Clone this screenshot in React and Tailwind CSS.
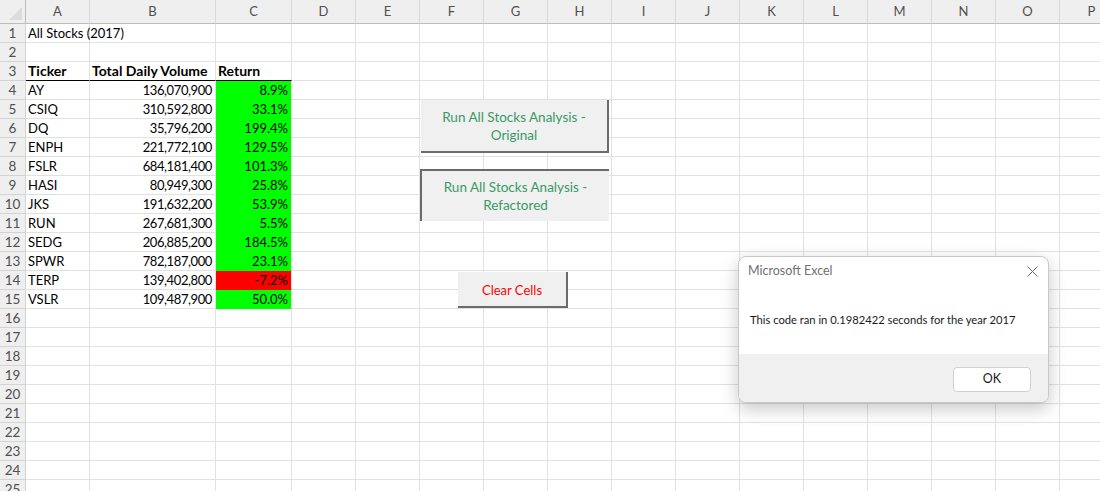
import React from "react";

const COLS = ["A","B","C","D","E","F","G","H","I","J","K","L","M","N","O","P","Q"];
const WIDTHS = [64,126,76,64,64,64,64,64,64,64,64,64,64,64,64,64,64];

const DATA = [
  ["AY","136,070,900","8.9%",true],
  ["CSIQ","310,592,800","33.1%",true],
  ["DQ","35,796,200","199.4%",true],
  ["ENPH","221,772,100","129.5%",true],
  ["FSLR","684,181,400","101.3%",true],
  ["HASI","80,949,300","25.8%",true],
  ["JKS","191,632,200","53.9%",true],
  ["RUN","267,681,300","5.5%",true],
  ["SEDG","206,885,200","184.5%",true],
  ["SPWR","782,187,000","23.1%",true],
  ["TERP","139,402,800","-7.2%",false],
  ["VSLR","109,487,900","50.0%",true],
];

function Cell({ children, className = "" }) {
  return (
    <div className={"h-[19px] border-r border-b border-[#e1e1e1] overflow-visible whitespace-nowrap leading-[18px] " + className}>
      {children}
    </div>
  );
}

function Row({ n }) {
  const cells = [];
  for (let c = 0; c < COLS.length; c++) {
    let content = null;
    let cls = "";
    if (n === 1 && c === 0) { content = "All Stocks (2017)"; cls = "pl-[2px] relative z-10"; }
    if (n === 3) {
      if (c === 0) { content = "Ticker"; cls = "pl-[2px] font-bold text-[14px]"; }
      if (c === 1) { content = "Total Daily Volume"; cls = "pl-[2px] font-bold text-[14px]"; }
      if (c === 2) { content = "Return"; cls = "pl-[2px] font-bold text-[14px]"; }
      if (c <= 2) cls += " border-b-black";
    }
    if (n >= 4 && n <= 15) {
      const d = DATA[n - 4];
      if (c === 0) { content = d[0]; cls = "pl-[2px]"; }
      if (c === 1) { content = d[1]; cls = "text-right pr-[3px] tracking-[-0.4px]"; }
      if (c === 2) {
        content = d[2];
        cls = "text-right pr-[3px] " + (d[3] ? "bg-[#00ff00] border-b-[#00ff00]" : "bg-[#ff0000] border-b-[#ff0000]");
      }
    }
    cells.push(<Cell key={c} className={cls}>{content}</Cell>);
  }
  return (
    <>
      <div className="h-[19px] border-r border-b border-[#d4d4d4] bg-[#efefef] text-[#505050] text-center leading-[18px] text-[13.5px]">{n}</div>
      {cells}
    </>
  );
}

export default function App() {
  const rows = [];
  for (let i = 1; i <= 25; i++) rows.push(<Row key={i} n={i} />);
  return (
    <div className="relative w-[1100px] h-[491px] overflow-hidden bg-white" style={{ fontFamily: "Lato, 'Open Sans', sans-serif" }}>
      <div
        className="grid text-[13px] text-black"
        style={{ gridTemplateColumns: "26px " + WIDTHS.map(w => w + "px").join(" "), gridTemplateRows: "24px" }}
      >
        <div className="h-[24px] border-r border-b border-[#bdbdbd] bg-[#efefef] relative">
          <div className="absolute right-[3px] bottom-[3px] w-0 h-0 border-l-[13px] border-l-transparent border-b-[13px] border-b-[#dcdcdc]"></div>
        </div>
        {COLS.map((c) => (
          <div key={c} className="h-[24px] border-r border-b border-r-[#d8d8d8] border-b-[#bdbdbd] bg-[#efefef] text-[#505050] text-center leading-[23px] text-[13px]">{c}</div>
        ))}
        {rows}
      </div>

      {/* Buttons */}
      <div className="absolute left-[421px] top-[100px] w-[188px] h-[53px] bg-[#f0f0f0] border-r-2 border-b-2 border-[#6b6b6b] flex flex-col items-center justify-center pt-[1px] text-[#389a66] text-[13.5px] leading-[18px]">
        <span>Run All Stocks Analysis -</span>
        <span>Original</span>
      </div>
      <div className="absolute left-[420px] top-[169px] w-[189px] h-[52px] bg-[#f0f0f0] border-l-2 border-t-2 border-[#6b6b6b] flex flex-col items-center justify-center text-[#389a66] text-[13.5px] leading-[18px]">
        <span>Run All Stocks Analysis -</span>
        <span>Refactored</span>
      </div>
      <div className="absolute left-[458px] top-[272px] w-[110px] h-[36px] bg-[#f0f0f0] border-r-2 border-b-2 border-[#6b6b6b] flex items-center justify-center pt-[3px] text-[#ff0000] text-[13px]">
        Clear Cells
      </div>

      {/* Dialog */}
      <div className="absolute left-[738px] top-[256px] w-[311px] h-[147px] rounded-[8px] border border-[#c8c8c8] bg-white overflow-hidden shadow-[0_6px_18px_rgba(0,0,0,0.22)] flex flex-col">
        <div className="h-[97px] flex flex-col">
          <div className="flex items-center justify-between pl-[9px] pr-[10px] pt-[2px] h-[26px]">
            <span className="text-[12.5px] text-[#707070]">Microsoft Excel</span>
            <svg width="11" height="11" viewBox="0 0 11 11">
              <path d="M0.5 0.5 L10.5 10.5 M10.5 0.5 L0.5 10.5" stroke="#6a6a6a" strokeWidth="1" fill="none" />
            </svg>
          </div>
          <div className="pl-[11px] pt-[29px] text-[11.2px] text-[#1a1a1a]">
            This code ran in 0.1982422 seconds for the year 2017
          </div>
        </div>
        <div className="flex-1 bg-[#f0f0f0] flex items-start justify-end pr-[17px] pt-[13px]">
          <div className="w-[78px] h-[25px] bg-white border border-[#d0d0d0] rounded-[4px] flex items-center justify-center text-[12.5px] text-[#1a1a1a]">
            OK
          </div>
        </div>
      </div>
    </div>
  );
}
